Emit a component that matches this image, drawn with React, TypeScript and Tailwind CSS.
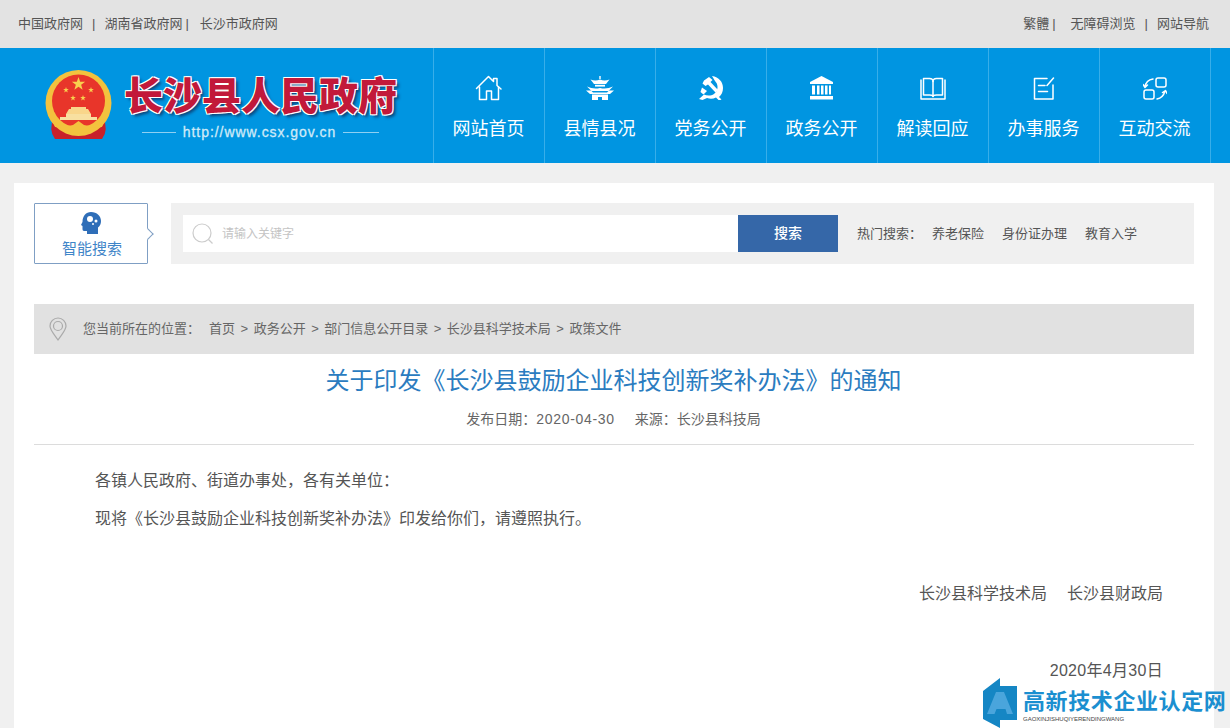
import React from "react";

const font = "font-['Liberation_Sans','Noto_Sans_CJK_SC',sans-serif]";

const star = (cx: number, cy: number, r: number) =>
  Array.from({ length: 10 }, (_, i) => {
    const a = (-90 + i * 36) * (Math.PI / 180);
    const d = i % 2 === 0 ? r : r * 0.4;
    return `${(cx + d * Math.cos(a)).toFixed(2)},${(cy + d * Math.sin(a)).toFixed(2)}`;
  }).join(" ");

const Emblem = () => (
  <svg width="68" height="71" viewBox="0 0 68 71">
    <path d="M9 47 Q3 60 10 69 L57 69 Q64 60 58 47Z" fill="#c8202a" />
    <circle cx="33.500" cy="33" r="33" fill="#f3c23e" />
    <circle cx="33.500" cy="31" r="26.500" fill="#e8352a" />
    <g fill="#f8d04e">
      <polygon points={star(33.5, 14, 7)} />
      <polygon points={star(21, 20, 3)} />
      <polygon points={star(46, 20, 3)} />
      <polygon points={star(28, 28, 3)} />
      <polygon points={star(38, 28, 3)} />
    </g>
    <path d="M26 37h15v2h2l3 5H21l3-5h2z" fill="#f9d68a" />
    <path d="M21 44h25v3h6v3H15v-3h6z" fill="#f8e0a0" />
    <path d="M8 52q12 5 20 3l5.500-4 5.500 4q9 2 20-3l-2 5-14 1q4 4 2 6l-7-2-4 2-5-2-7 2q-1-3 3-6L10 57z" fill="#f3c23e" />
  </svg>
);

const cls = { fill: "none", stroke: "#fff", strokeWidth: 1.5, strokeLinecap: "round" as const, strokeLinejoin: "round" as const };

const IconHome = () => (
  <svg width="28" height="26" viewBox="0 0 28 26" {...cls}>
    <path d="M1.500 13.500 13.500 1.500l5 5V3.500h3.500v7l4 3.500" />
    <path d="M4.500 12v12.500h7V16h5v8.500h7V12" />
  </svg>
);
const IconTower = () => (
  <svg width="28" height="24" viewBox="0 0 28 24">
    <g fill="#fff">
      <path d="M13.300 0h1.400v3h-1.400z" />
      <path d="M4.500 3.500q5 2 9.500 0 4.500 2 9.500 0L20 8H8z" />
      <rect x="9" y="8.800" width="10" height="1.800" />
      <path d="M1 10.500q6 3 13 1.500 7 1.500 13-1.500l-4.500 4.500h-17z" />
      <path d="M0 14.500h5l2 2h14l2-2h5l-4 3.500H4z" />
      <path d="M6 18.500h16V24h-6v-3h-4v3H6z" />
    </g>
  </svg>
);
const IconParty = () => (
  <svg width="24" height="24" viewBox="0 0 24 24">
    <g fill="#fff">
      <path d="M13 0c7 1 11 6 11 12 0 4-1.500 7-4 9l2.500 2.500-2.500 1-3-3c-3 1.500-6 1.500-9 .5L3.500 24 0 23l5-4.500C8 20 12 20 15 18c4-3 5-9 1-13z" />
      <path d="M5 4.500 10 1l3.500 3-2 2 7.500 8-2.500 2.500-7.500-8L6.500 10 3.500 7.500z" />
      <path d="M3 11.500l5 3.500-3.500 3.500-3-2.500z" />
    </g>
  </svg>
);
const IconBank = () => (
  <svg width="25" height="24" viewBox="0 0 25 24" fill="#fff">
    <path d="M12.500 0 24 6v2H1V6z" />
    <path d="M3 9.500h3v9H3zM8 9.500h2.500v9H8zM12 9.500h2.500v9H12zM16 9.500h2.500v9H16zM20 9.500h2v9h-2z" />
    <path d="M1 20h23v3.500H1z" />
  </svg>
);
const IconBook = () => (
  <svg width="26" height="23" viewBox="0 0 26 23" {...cls}>
    <path d="M1 3v19h24V3" />
    <path d="M3.500 18V1.500h6c2 0 3.500 1 3.500 3 0-2 1.500-3 3.500-3h6V18h-6c-2 0-3.500.5-3.500 1.500 0-1-1.500-1.500-3.500-1.500z" />
    <path d="M13 4.500v15" />
  </svg>
);
const IconEdit = () => (
  <svg width="22" height="23" viewBox="0 0 22 23" {...cls}>
    <path d="M14 1.500H1.500V22H20V8" />
    <path d="M5.500 8.500H12M5.500 14.500h9M14 8.500 20.500 1" />
  </svg>
);
const IconSwap = () => (
  <svg width="24" height="23" viewBox="0 0 24 23" {...cls}>
    <rect x="13" y="1" width="10" height="9" rx="2" />
    <rect x="1" y="13" width="10" height="9" rx="2" />
    <path d="M10 2Q3 3 2 10M0 7.500 2 10.500l2.500-2.500" />
    <path d="M14 22q6-1 8-8M19.500 15.500l3-2 1.500 3" />
  </svg>
);

const nav: [string, React.ReactNode][] = [
  ["网站首页", <IconHome />],
  ["县情县况", <IconTower />],
  ["党务公开", <IconParty />],
  ["政务公开", <IconBank />],
  ["解读回应", <IconBook />],
  ["办事服务", <IconEdit />],
  ["互动交流", <IconSwap />],
];

const crumbs = ["首页", ">", "政务公开", ">", "部门信息公开目录", ">", "长沙县科学技术局", ">", "政策文件"];

export default function App() {
  return (
    <div className={`${font} relative h-[728px] w-[1230px] overflow-hidden bg-[#f0f0f0] text-[#555]`}>
      <div className="flex h-12 items-center justify-between bg-[#e3e3e3] pl-[18px] pr-[21px] text-[13px] text-[#555]">
        <div className="flex">
          <span>中国政府网</span><span className="ml-[9px]">|</span>
          <span className="ml-[9px]">湖南省政府网</span><span className="ml-[3px]">|</span>
          <span className="ml-[11px]">长沙市政府网</span>
        </div>
        <div className="flex">
          <span>繁體</span><span className="ml-[3px]">|</span>
          <span className="ml-[15px]">无障碍浏览</span><span className="ml-[9px]">|</span>
          <span className="ml-[9px]">网站导航</span>
        </div>
      </div>

      <div className="flex h-[115px] bg-[#0095e1] pl-[45px]">
        <div className="flex w-[388px] items-start pt-[22px]">
          <Emblem />
          <div className="ml-[11px] flex flex-col items-center">
            <div className="mt-[4px] text-[39px] font-black leading-[46px] whitespace-nowrap text-[#c2193a] [text-shadow:1px_1px_0_#fff,-1px_-1px_0_#fff,1px_-1px_0_#fff,-1px_1px_0_#fff,3px_3px_3px_#0b4a80]">
              长沙县人民政府
            </div>
            <div className="mt-[3px] flex items-center gap-[7px] text-[14px] leading-[18px] tracking-[0.95px] text-[#cfeaf8]">
              <span className="h-px w-[34px] bg-[#8fd0f2]" />
              <span className="[-webkit-text-stroke:0.3px_#cfeaf8]">http://www.csx.gov.cn</span>
              <span className="h-px w-[36px] bg-[#8fd0f2]" />
            </div>
          </div>
        </div>
        <div className="flex border-r border-[#38aee9]">
          {nav.map(([label, icon]) => (
            <div key={label} className="flex w-[111px] flex-col items-center border-l border-[#38aee9] pr-[1px] text-white">
              <div className="mt-[27px] flex h-[26px] items-center justify-center">{icon}</div>
              <div className="mt-[15px] text-[18px] leading-[26px]">{label}</div>
            </div>
          ))}
        </div>
      </div>

      <div className="ml-[14px] mr-4 mt-5 h-[600px] bg-white px-5 pt-5">
        <div className="flex h-[61px]">
          <div className="relative flex h-[61px] w-[114px] flex-col items-center rounded-[1px] border border-[#7f9fc4] pt-[8px]">
            <svg width="20" height="22" viewBox="0 0 20 22">
              <path d="M10 0c6 0 10 4 10 9 0 3-1 5-3 6.500V22H6v-3H3c-1 0-1.500-1-1.500-2v-3L0 13l1.500-3C1.500 4 5 0 10 0z" fill="#2f6eb8" />
              <circle cx="9" cy="7" r="3" fill="#fff" />
              <circle cx="15" cy="9" r="1.500" fill="#fff" />
              <circle cx="12" cy="12" r="1" fill="#fff" />
            </svg>
            <span className="ml-[2px] mt-[5px] text-[15px] leading-[20px] text-[#3f85c8]">智能搜索</span>
            <span className="absolute -right-[5px] top-[26px] h-2 w-2 rotate-45 border-r border-t border-[#7f9fc4] bg-white" />
          </div>
          <div className="ml-[23px] flex h-[61px] flex-1 items-center bg-[#f0f0f0] pl-3">
            <div className="flex h-[37px] w-[555px] items-center bg-white pl-[9px]">
              <svg width="22" height="22" viewBox="0 0 22 22" fill="none" stroke="#ccc" strokeWidth="1.200">
                <circle cx="10" cy="10" r="9" />
                <path d="M16.500 16.500l4 4" />
              </svg>
              <span className="ml-[8px] text-[12px] text-[#c4c4c4]">请输入关键字</span>
            </div>
            <div className="flex h-[37px] w-[100px] items-center justify-center bg-[#3567a8] text-[14px] font-medium text-white">搜索</div>
            <div className="ml-[19px] flex text-[13px] text-[#555]">
              <span>热门搜索：</span>
              <span className="ml-[10px]">养老保险</span>
              <span className="ml-[18px]">身份证办理</span>
              <span className="ml-[18px]">教育入学</span>
            </div>
          </div>
        </div>

        <div className="mt-10 flex h-[50px] items-center bg-[#e1e1e1] pl-[15px] text-[13px] text-[#666]">
          <svg width="18" height="24" viewBox="0 0 18 24" fill="none" stroke="#aaa" strokeWidth="1.200">
            <path d="M9 23C5 17 1 13 1 9a8 8 0 0 1 16 0c0 4-4 8-8 14z" />
            <circle cx="9" cy="9" r="4.500" />
          </svg>
          <span className="ml-[16px]">您当前所在的位置：</span>
          <div className="ml-[9px] flex gap-[5.500px]">
            {crumbs.map((c, i) => (
              <span key={i}>{c}</span>
            ))}
          </div>
        </div>

        <h1 className="mt-[10px] pr-[1px] text-center text-[24px] leading-[34px] text-[#2b7cc0]">关于印发《长沙县鼓励企业科技创新奖补办法》的通知</h1>
        <div className="mt-[11px] flex h-9 justify-center border-b border-[#dcdcdc] pr-[1px] text-[14px] leading-[20px] text-[#666]">
          <span>发布日期：<span className="tracking-[0.7px]">2020-04-30</span></span>
          <span className="ml-[20px]">来源：长沙县科技局</span>
        </div>

        <div className="pl-[61px] pr-[31px] pt-6 text-[16px] leading-[24px] text-[#555]">
          <p>各镇人民政府、街道办事处，各有关单位：</p>
          <p className="mt-[14px]">现将《长沙县鼓励企业科技创新奖补办法》印发给你们，请遵照执行。</p>
          <p className="mt-[51px] flex justify-end gap-5">
            <span>长沙县科学技术局</span>
            <span>长沙县财政局</span>
          </p>
          <p className="mt-[53px] text-right tracking-[0.3px]">2020年4月30日</p>
        </div>
      </div>

      <div className="absolute bottom-0 right-[3px] flex h-[50px] w-[244px] items-end">
        <svg width="34" height="50" viewBox="0 0 34 50" className="shrink-0">
          <path d="M0 13 17 0v8h17v34H17v8L0 41z" fill="#1586c4" />
          <path d="M4 36 13 14h8l9 22h-6l-1.500-5h-9L11.500 36z" fill="#4aa5dc" />
        </svg>
        <div className="ml-[6px] flex flex-col pb-[5px]">
          <span className="whitespace-nowrap text-[22px] font-bold leading-[26px] tracking-[0.6px] text-[#1b8fd0]">高新技术企业认定网</span>
          <span className="text-[6px] leading-[8px] whitespace-nowrap text-[#444]">GAOXINJISHUQIYERENDINGWANG</span>
        </div>
      </div>
    </div>
  );
}
